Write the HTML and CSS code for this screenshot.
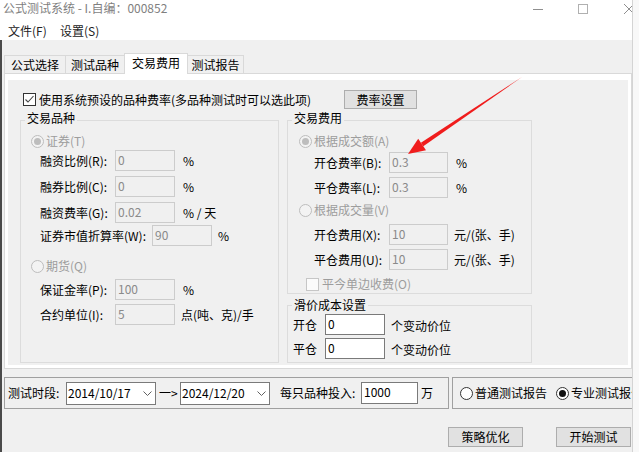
FILE: index.html
```html
<!DOCTYPE html>
<html lang="zh-CN">
<head>
<meta charset="utf-8">
<title>公式测试系统</title>
<link rel="stylesheet" href="styles.css">
</head>
<body>
<div class="window">
  <div class="titlebar">
    <span class="title">公式测试系统 - I.自编：000852</span>
    <svg class="wc wc-min" width="10" height="10" viewBox="0 0 10 10"><path d="M0 5.5H10" stroke="#8f8f8f" stroke-width="1"/></svg>
    <svg class="wc wc-max" width="10" height="10" viewBox="0 0 10 10"><rect x="0.5" y="0.5" width="9" height="9" fill="none" stroke="#b0b0b0"/></svg>
    <svg class="wc wc-close" width="10" height="10" viewBox="0 0 10 10"><path d="M0 0L10 10M10 0L0 10" stroke="#8f8f8f" stroke-width="1"/></svg>
  </div>
  <div class="menubar">
    <span class="menu">文件(F)</span>
    <span class="menu">设置(S)</span>
  </div>
  <div class="main">
    <div class="tabs">
      <div class="tab t1">公式选择</div>
      <div class="tab t2">测试品种</div>
      <div class="tab t3 active">交易费用</div>
      <div class="tab t4">测试报告</div>
    </div>
    <div class="tabpanel">
      <div class="pane">
        <div class="toprow">
          <div class="chkline">
            <span class="check"><svg width="11" height="11" viewBox="0 0 11 11"><path d="M1.5 5.5L4 8L9.5 2" fill="none" stroke="#444" stroke-width="1.1"/></svg></span>
            <span>使用系统预设的品种费率(多品种测试时可以选此项)</span>
          </div>
          <div class="btn btn-rate">费率设置</div>
        </div>
        <div class="groups">
          <fieldset class="group g-left">
            <legend>交易品种</legend>
            <div class="opt dis"><span class="radio dis checked"></span><span>证券(T)</span></div>
            <div class="row m2"><span class="lbl">融资比例(R):</span><span class="field">0</span><span class="unit">%</span></div>
            <div class="row m5"><span class="lbl">融券比例(C):</span><span class="field">0</span><span class="unit">%</span></div>
            <div class="row m5"><span class="lbl">融资费率(G):</span><span class="field">0.02</span><span class="unit">% / 天</span></div>
            <div class="row m2"><span class="lbl wide">证券市值折算率(W):</span><span class="field">90</span><span class="unit u-tight">%</span></div>
            <div class="opt dis m15"><span class="radio dis"></span><span>期货(Q)</span></div>
            <div class="row m6"><span class="lbl">保证金率(P):</span><span class="field">100</span><span class="unit">%</span></div>
            <div class="row m4"><span class="lbl">合约单位(I):</span><span class="field">5</span><span class="unit u-tight">点(吨、克)/手</span></div>
          </fieldset>
          <div class="rcol">
            <fieldset class="group g-right">
              <legend>交易费用</legend>
              <div class="opt dis"><span class="radio dis checked"></span><span>根据成交额(A)</span></div>
              <div class="row m4"><span class="lbl">开仓费率(B):</span><span class="field">0.3</span><span class="unit">%</span></div>
              <div class="row m4"><span class="lbl">平仓费率(L):</span><span class="field">0.3</span><span class="unit">%</span></div>
              <div class="opt dis m5"><span class="radio dis"></span><span>根据成交量(V)</span></div>
              <div class="row m7"><span class="lbl">开仓费用(X):</span><span class="field">10</span><span class="unit u-tight">元/(张、手)</span></div>
              <div class="row m4"><span class="lbl">平仓费用(U):</span><span class="field">10</span><span class="unit u-tight">元/(张、手)</span></div>
              <div class="opt opt-chk dis m7"><span class="check dis"></span><span>平今单边收费(O)</span></div>
            </fieldset>
            <fieldset class="group g-slip">
              <legend class="legend-tight">滑价成本设置</legend>
              <div class="row"><span class="lbl lbl-short">开仓</span><span class="field on">0</span><span class="unit">个变动价位</span></div>
              <div class="row m3"><span class="lbl lbl-short">平仓</span><span class="field on">0</span><span class="unit">个变动价位</span></div>
            </fieldset>
          </div>
        </div>
      </div>
    </div>
    <div class="bottom">
      <div class="frame f-period">
        <span class="plabel">测试时段:</span>
        <div class="combo"><span>2014/10/17</span><svg width="9" height="5" viewBox="0 0 9 5"><path d="M0.5 0.5L4.5 4.5L8.5 0.5" fill="none" stroke="#606060" stroke-width="1"/></svg></div>
        <span class="to">一&gt;</span>
        <div class="combo"><span>2024/12/20</span><svg width="9" height="5" viewBox="0 0 9 5"><path d="M0.5 0.5L4.5 4.5L8.5 0.5" fill="none" stroke="#606060" stroke-width="1"/></svg></div>
        <span class="invest">每只品种投入:</span>
        <span class="field on amount">1000</span>
        <span class="wan">万</span>
      </div>
      <div class="frame f-report">
        <div class="ropt"><span class="radio"></span><span>普通测试报告</span></div>
        <div class="ropt"><span class="radio checked"></span><span>专业测试报告</span></div>
      </div>
    </div>
    <div class="actions">
      <div class="btn">策略优化</div>
      <div class="btn">开始测试</div>
    </div>
  </div>
</div>
<svg class="annot" width="639" height="452" viewBox="0 0 639 452">
  <polygon points="522,77 423.3,146.3 420.9,142.7" fill="#f01c1c"/>
  <polygon points="408,154 426,150.3 418.2,138.7" fill="#f01c1c"/>
</svg>
</body>
</html>
```
FILE: styles.css
```css
* { box-sizing: border-box; }
html, body { margin: 0; padding: 0; }
body {
  width: 639px;
  height: 452px;
  overflow: hidden;
  position: relative;
  display: flex;
  background: #f8f8f8;
  font: 12px/14px "Noto Sans CJK SC", "Microsoft YaHei", sans-serif;
  color: #000;
}
.window {
  width: 633px;
  height: 452px;
  flex-shrink: 0;
  border-right: 1px solid #d4d4d4;
  background: #f0f0f0;
  display: flex;
  flex-direction: column;
  overflow: hidden;
}
.titlebar {
  height: 22px;
  flex-shrink: 0;
  background: #fff;
  display: flex;
  align-items: flex-start;
  padding: 1px 0 0 3px;
  overflow: hidden;
}
.title { width: 530px; flex-shrink: 0; color: #7f7f7f; white-space: nowrap; }
.wc { flex-shrink: 0; margin-top: 3px; }
.wc-min { margin-right: 35px; }
.wc-max { margin-right: 36px; }
.menubar {
  height: 18px;
  flex-shrink: 0;
  background: #fff;
  display: flex;
  padding: 2px 0 0 8px;
}
.menu { width: 52px; color: #222; }
.main {
  flex: 1;
  border-left: 2px solid #4a4a4a;
  display: flex;
  flex-direction: column;
}
.tabs {
  height: 33px;
  display: flex;
  align-items: flex-end;
  padding-left: 2px;
  flex-shrink: 0;
}
.tab {
  height: 18px;
  border: 1px solid #d9d9d9;
  border-bottom: 0;
  background: #f0f0f0;
  display: flex;
  align-items: center;
  justify-content: center;
  margin-left: -1px;
  flex-shrink: 0;
}
.tab.t1 { width: 62px; margin-left: 0; }
.tab.t2 { width: 60px; }
.tab.t3 { width: 64px; }
.tab.t4 { width: 57px; }
.tab.active {
  height: 21px;
  background: #fff;
  margin-bottom: -1px;
  position: relative;
  z-index: 1;
  padding-bottom: 2px;
}
.tabpanel {
  margin-left: 2px;
  width: 628px;
  height: 296px;
  flex-shrink: 0;
  border: 1px solid #d9d9d9;
  background: #fff;
  padding: 6px 3px 3px 3px;
}
.pane {
  height: 285px;
  background: #f0f0f0;
  padding: 10px 0 0 12px;
}
.toprow { display: flex; align-items: center; height: 19px; }
.chkline {
  width: 324px;
  display: flex;
  align-items: center;
  gap: 3px;
  padding-left: 3px;
  white-space: nowrap;
}
.check {
  width: 13px;
  height: 13px;
  flex-shrink: 0;
  border: 1px solid #333;
  background: #fff;
  display: flex;
  align-items: center;
  justify-content: center;
}
.check.dis { border-color: #c6c6c6; background: #fbfbfb; }
.btn {
  width: 75px;
  height: 20px;
  flex-shrink: 0;
  border: 1px solid #adadad;
  background: #e1e1e1;
  display: flex;
  align-items: center;
  justify-content: center;
}
.btn-rate { width: 73px; height: 19px; }
.groups { display: flex; gap: 8px; margin-top: 2px; }
.group {
  margin: 0;
  min-width: 0;
  border: 1px solid #dcdcdc;
  padding: 5px 0 2px 0;
}
.group legend {
  margin-left: 4px;
  padding: 0 2px 4px 2px;
  line-height: 14px;
}
.group legend.legend-tight { padding-bottom: 0; }
.g-left { width: 259px; --opt: 10px; --ind: 19px; }
.rcol { width: 245px; display: flex; flex-direction: column; gap: 4px; }
.g-right { --opt: 11px; --ind: 26px; }
.g-slip { padding: 2px 0 3px 0; --ind: 5px; }
.opt {
  display: flex;
  align-items: center;
  gap: 2px;
  height: 14px;
  margin-left: var(--opt);
  white-space: nowrap;
}
.opt-chk { margin-left: 18px; gap: 3px; }
.dis { color: #9d9d9d; }
.radio {
  width: 13px;
  height: 13px;
  flex-shrink: 0;
  border-radius: 50%;
  border: 1px solid #333;
  background: #fff;
  display: flex;
  align-items: center;
  justify-content: center;
}
.radio.checked::after {
  content: "";
  width: 7px;
  height: 7px;
  border-radius: 50%;
  background: #111;
}
.radio.dis { border-color: #bdbdbd; background: #f3f3f3; }
.radio.dis.checked::after { background: #bdbdbd; }
.row {
  display: flex;
  align-items: center;
  height: 21px;
  margin-left: var(--ind);
  white-space: nowrap;
}
.m2 { margin-top: 2px; }
.m3 { margin-top: 3px; }
.m4 { margin-top: 4px; }
.m5 { margin-top: 5px; }
.m6 { margin-top: 6px; }
.m7 { margin-top: 7px; }
.m15 { margin-top: 13px; }
.lbl { width: 75px; flex-shrink: 0; }
.lbl.wide { width: 112px; }
.lbl.lbl-short { width: 32px; }
.field {
  width: 60px;
  height: 21px;
  flex-shrink: 0;
  border: 1px solid #cccccc;
  background: #f0f0f0;
  color: #8a8a8a;
  padding: 0 2px;
  line-height: 17px;
}
.g-right .field { width: 59px; }
.field.on { background: #fff; border-color: #7a7a7a; color: #000; }
.unit { margin-left: 8px; }
.unit.u-tight { margin-left: 6px; }
.g-slip .unit { margin-left: 6px; padding-top: 2px; }
.bottom {
  display: flex;
  gap: 3px;
  margin-top: 8px;
  padding-left: 2px;
  flex-shrink: 0;
}
.frame {
  height: 32px;
  flex-shrink: 0;
  border: 1px solid #a0a0a0;
  display: flex;
  align-items: center;
  white-space: nowrap;
}
.f-period { width: 445px; padding-left: 3px; }
.f-report { width: 200px; padding-left: 7px; }
.plabel { width: 58px; flex-shrink: 0; }
.combo {
  width: 90px;
  height: 23px;
  flex-shrink: 0;
  border: 1px solid #7a7a7a;
  background: #fff;
  display: flex;
  align-items: center;
  justify-content: space-between;
  padding: 0 3px 0 1px;
}
.to { width: 21px; flex-shrink: 0; margin-left: 3px; }
.invest { width: 81px; flex-shrink: 0; margin-left: 10px; }
.field.amount { width: 57px; height: 22px; }
.wan { margin-left: 3px; }
.ropt { display: flex; align-items: center; gap: 2px; }
.ropt + .ropt { margin-left: 9px; }
.actions {
  display: flex;
  gap: 33px;
  margin-top: 18px;
  padding-left: 446px;
  flex-shrink: 0;
}
.annot { position: absolute; left: 0; top: 0; pointer-events: none; }
```
